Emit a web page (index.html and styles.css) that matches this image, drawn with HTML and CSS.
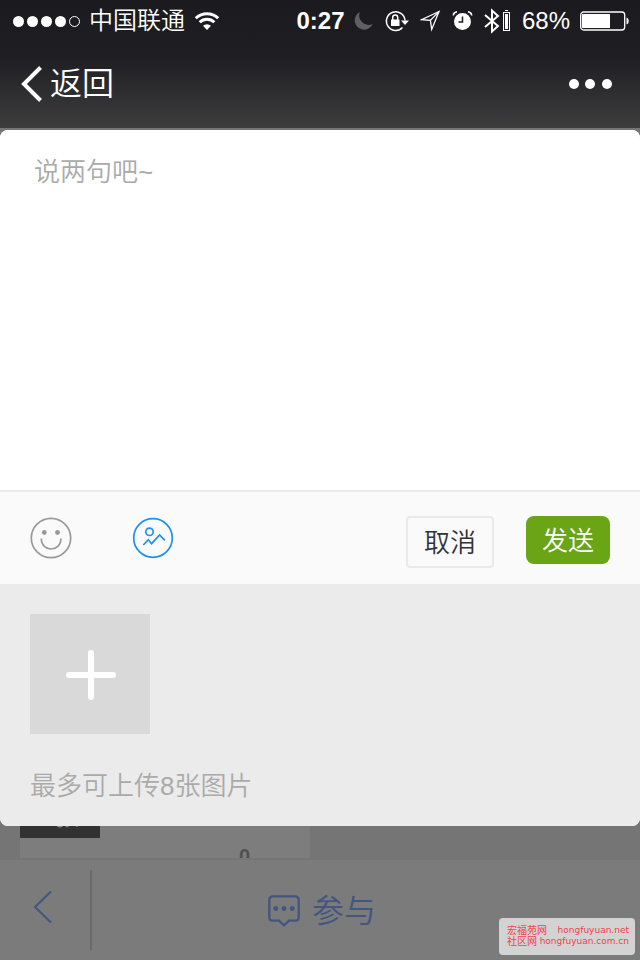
FILE: index.html
```html
<!DOCTYPE html>
<html lang="zh-CN">
<head>
    <meta charset="UTF-8">
    <meta name="viewport" content="width=device-width, initial-scale=1.0">
    <title>参与话题</title>
    <link rel="stylesheet" href="styles.css">
</head>
<body>
    <header class="header">
        <div class="status-bar">
            <div class="carrier">
                <svg class="signal" width="68" height="12" viewBox="0 0 68 12" fill="#fff">
                    <circle cx="6.500" cy="6.500" r="5.500"/>
                    <circle cx="20.500" cy="6.500" r="5.500"/>
                    <circle cx="34.500" cy="6.500" r="5.500"/>
                    <circle cx="48.500" cy="6.500" r="5.500"/>
                    <circle cx="62.500" cy="6.500" r="5" fill="none" stroke="#fff"/>
                </svg>
                <span>中国联通</span>
                <svg width="26" height="20" viewBox="0 0 26 20" fill="none" stroke="#fff" stroke-width="3">
                    <path d="M1.800 7.200a16 16 0 0 1 22.400 0"/>
                    <path d="M5.700 11.300a10.300 10.300 0 0 1 14.600 0"/>
                    <path d="M13 19l-4-4.200a5.800 5.800 0 0 1 8 0z" fill="#fff" stroke="none"/>
                </svg>
            </div>
            <strong class="time">0:27</strong>
            <div class="indicators">
                <svg width="20" height="20" viewBox="0 0 20 20" fill="#5f5f64">
                    <path d="M6 1a9.300 9.300 0 1 0 12.600 12A9.300 9.300 0 0 1 6 1z"/>
                </svg>
                <svg width="24" height="22" viewBox="0 0 24 22" fill="none" stroke="#fff">
                    <path d="M17.500 17.500A9.300 9.300 0 1 1 20 10.500" stroke-width="1.500"/>
                    <path d="M16 10.500h8l-4 4.500z" fill="#fff" stroke="none"/>
                    <rect x="6" y="9.500" width="8.500" height="6.500" fill="#fff" stroke="none"/>
                    <path d="M7.700 10V7.600a2.500 2.500 0 0 1 5 0V10" stroke-width="1.500"/>
                </svg>
                <svg width="21" height="22" viewBox="0 0 21 22" fill="none" stroke="#fff" stroke-width="1.300">
                    <path d="M19 1.500L1.500 9.700l8.900.7 1.300 9z"/>
                    <path d="M19 1.500l-8.600 8.900"/>
                </svg>
                <svg width="21" height="22" viewBox="0 0 21 22" fill="none" stroke="#fff" stroke-width="1.500">
                    <circle cx="10.500" cy="11.500" r="8.500" fill="#fff" stroke="none"/>
                    <path d="M1.200 5.500C1.500 3.500 3 2 5 1.800M19.800 5.500C19.500 3.500 18 2 16 1.800"/>
                    <path d="M10.500 6.500v5.500H6.500" stroke="#1c1c20"/>
                </svg>
                <svg width="27" height="26" viewBox="0 0 27 26" fill="none" stroke="#fff">
                    <path d="M1 7l13 11-6 5.500v-21l6 5.500L1 19" stroke-width="2"/>
                    <rect x="19.500" y="4.500" width="6" height="18"/>
                    <path d="M21 2.500h3"/>
                    <path d="M21 6h3v15h-3z" fill="#fff" stroke="none"/>
                </svg>
                <span class="battery">
                    68%
                    <svg width="49" height="20" viewBox="0 0 49 20" fill="none" stroke="#fff">
                        <rect x=".7" y="1" width="44" height="18" rx="3" stroke-width="1.300"/>
                        <path d="M2 3h28v14H2z" fill="#fff" stroke="none"/>
                        <path d="M46.500 6.500c3 1 3 6 0 7z" fill="#fff" stroke="none"/>
                    </svg>
                </span>
            </div>
        </div>
        <nav class="nav-bar">
            <a href="#" class="nav-back">
                <svg width="22" height="36" viewBox="0 0 22 36" fill="none" stroke="#fff" stroke-width="4">
                    <path d="M19.500 1.500L3 18l16.500 16.500"/>
                </svg>
                返回
            </a>
            <button type="button" class="nav-more" aria-label="更多">
                <svg width="44" height="12" viewBox="0 0 44 12" fill="#fff">
                    <circle cx="6" cy="6" r="5"/>
                    <circle cx="22" cy="6" r="5"/>
                    <circle cx="39" cy="6" r="5"/>
                </svg>
            </button>
        </nav>
    </header>

    <main class="page">
        <form class="composer">
            <textarea class="composer-text" placeholder="说两句吧~" aria-label="说两句吧"></textarea>
            <div class="toolbar">
                <button type="button" class="tool" aria-label="表情">
                    <svg width="42" height="42" viewBox="0 0 42 42" fill="none" stroke="#999" stroke-width="1.700">
                        <circle cx="21" cy="21" r="19.700"/>
                        <circle cx="14.300" cy="15.500" r="2.400" fill="#999" stroke="none"/>
                        <circle cx="27.500" cy="15.500" r="2.400" fill="#999" stroke="none"/>
                        <path d="M11.300 21.500c0 14 19.600 14 19.600 0"/>
                    </svg>
                </button>
                <button type="button" class="tool" aria-label="图片">
                    <svg width="42" height="42" viewBox="0 0 42 42" fill="none" stroke="#1e90ee" stroke-width="1.700">
                        <circle cx="21" cy="21" r="19.300"/>
                        <circle cx="17.500" cy="14.800" r="3.700"/>
                        <path d="M11.300 28l5-5.300 3.300 4 8-8.700 5.300 5.300"/>
                    </svg>
                </button>
                <div class="actions">
                    <button type="button" class="btn btn-cancel">取消</button>
                    <button type="submit" class="btn btn-send">发送</button>
                </div>
            </div>
            <div class="upload">
                <button type="button" class="upload-add" aria-label="添加图片">
                    <svg width="52" height="52" viewBox="0 0 52 52" stroke="#fff" stroke-width="6" stroke-linecap="round">
                        <path d="M27 5v44M5 27h44"/>
                    </svg>
                </button>
                <p class="upload-tip">最多可上传8张图片</p>
            </div>
        </form>
        <div class="thread">
            <div class="thread-card">
                <span class="photo-count">1张</span>
                <span class="thread-likes">0</span>
            </div>
        </div>
    </main>

    <footer class="bottom-bar">
        <a href="#" class="bottom-back" aria-label="返回">
            <svg width="20" height="34" viewBox="0 0 20 34" fill="none" stroke="#42567f" stroke-width="2">
                <path d="M18 1.500L2 17l16 15.500"/>
            </svg>
        </a>
        <a href="#" class="join">
            <svg width="32" height="32" viewBox="0 0 32 32" fill="none" stroke="#42567f" stroke-width="2.300">
                <path d="M5 1.300h22q3.700 0 3.700 3.700v17q0 3.700-3.700 3.700h-6L16 30.300l-5-4.600H5q-3.700 0-3.700-3.700V5q0-3.700 3.700-3.700z"/>
                <g fill="#42567f" stroke="none">
                    <circle cx="7.700" cy="13.500" r="2.400"/>
                    <circle cx="16" cy="13.500" r="2.400"/>
                    <circle cx="24.300" cy="13.500" r="2.400"/>
                </g>
            </svg>
            参与
        </a>
    </footer>

    <div class="watermark">
        <div class="watermark-row"><span>宏福苑网</span><span class="domain">hongfuyuan.net</span></div>
        <div class="watermark-row"><span>社区网</span><span class="domain">hongfuyuan.com.cn</span></div>
    </div>
</body>
</html>
```
FILE: styles.css
```css
* {
    box-sizing: border-box;
}
body {
    margin: 0;
    min-height: 100vh;
    display: flex;
    flex-direction: column;
    font-family: "Liberation Sans", "Noto Sans CJK SC", sans-serif;
    font-size: 26px;
    font-weight: 350;
    background: #7b7b7b;
}
svg {
    display: block;
    flex: none;
}
a {
    color: inherit;
    text-decoration: none;
}
button {
    padding: 0;
    border: none;
    background: none;
    font: inherit;
    cursor: pointer;
}

/* header */
.header {
    color: #fff;
    background: linear-gradient(#1a1a1f 0%, #1f1f23 45%, #3d3d3e 100%);
}
.status-bar {
    display: grid;
    grid-template-columns: 1fr auto 1fr;
    align-items: center;
    height: 40px;
    padding: 1px 11px 0 12px;
    font-size: 24px;
    line-height: 38px;
}
.time {
    font-weight: bold;
}
.carrier, .indicators, .battery {
    display: flex;
    align-items: center;
}
.carrier {
    gap: 9px;
}
.indicators {
    justify-content: flex-end;
    gap: 11px;
}
.battery {
    gap: 10px;
}
.nav-bar {
    display: flex;
    justify-content: space-between;
    align-items: center;
    height: 88px;
    padding: 0 28px 0 21px;
}
.nav-back {
    display: flex;
    align-items: center;
    gap: 7px;
    font-size: 32px;
    line-height: 40px;
}

/* composer */
.page {
    flex: 1;
    display: flex;
    flex-direction: column;
    padding-top: 2px;
    background: #757575;
}
.composer {
    border-radius: 8px;
    overflow: hidden;
    background: #fff;
}
.composer-text {
    display: block;
    width: 100%;
    height: 360px;
    padding: 22px 34px;
    border: none;
    outline: none;
    resize: none;
    font: inherit;
    line-height: 40px;
}
.composer-text::placeholder {
    color: #aaa;
}
.toolbar {
    display: flex;
    align-items: flex-start;
    gap: 60px;
    padding: 24px 30px 16px;
    border-top: 2px solid #eaeaea;
    background: #fafafa;
}
.tool {
    padding-top: 1px;
}
.actions {
    display: flex;
    align-items: flex-start;
    gap: 32px;
    margin-left: auto;
}
.btn {
    padding-top: 2px;
    border-radius: 4px;
    line-height: 46px;
}
.btn-cancel {
    width: 88px;
    border: 2px solid #eaeaea;
    color: #333;
}
.btn-send {
    width: 84px;
    border-radius: 8px;
    color: #fff;
    background: #69a514;
}
.upload {
    padding: 30px 30px 20px;
    background: #ebebeb;
}
.upload-add {
    display: grid;
    place-items: center;
    width: 120px;
    height: 120px;
    background: #d9d9d9;
}
.upload-tip {
    margin: 32px 0 0;
    line-height: 40px;
    color: #aaa;
}

/* thread behind the composer */
.thread {
    flex: 1;
    display: flex;
    min-height: 32px;
    padding: 0 20px;
    overflow: hidden;
}
.thread-card {
    display: flex;
    justify-content: space-between;
    width: 290px;
    height: 32px;
    padding-right: 60px;
    overflow: hidden;
    background: #7d7d7d;
}
.photo-count {
    display: flex;
    justify-content: center;
    align-items: flex-end;
    width: 80px;
    height: 12px;
    padding-bottom: 9px;
    font-size: 24px;
    line-height: 24px;
    color: #888;
    background: #323232;
}
.thread-likes {
    padding-top: 18px;
    font-size: 20px;
    font-weight: bold;
    line-height: 24px;
    color: #505050;
}

/* bottom bar */
.bottom-bar {
    display: grid;
    grid-template-columns: 1fr auto 1fr;
    align-items: center;
    height: 102px;
    border-top: 2px solid #757575;
    color: #42567f;
    background: #7b7b7b;
}
.bottom-back {
    display: flex;
    align-items: center;
    width: 92px;
    height: 80px;
    padding: 0 0 6px 33px;
    border-right: 2px solid #6a6a6a;
}
.join {
    display: flex;
    align-items: center;
    gap: 12px;
    padding: 2px 0 0 4px;
    font-size: 32px;
    line-height: 40px;
}

.watermark {
    position: absolute;
    right: 5px;
    bottom: 5px;
    width: 136px;
    padding: 7px 6px 8px 8px;
    border-radius: 4px;
    font-family: "DejaVu Sans", "Noto Sans CJK SC", sans-serif;
    font-size: 10px;
    font-weight: normal;
    line-height: 11px;
    color: #f0414b;
    background: #d3d3d3;
}
.watermark-row {
    display: flex;
    justify-content: space-between;
}
.domain {
    font-size: 9px;
}
```
